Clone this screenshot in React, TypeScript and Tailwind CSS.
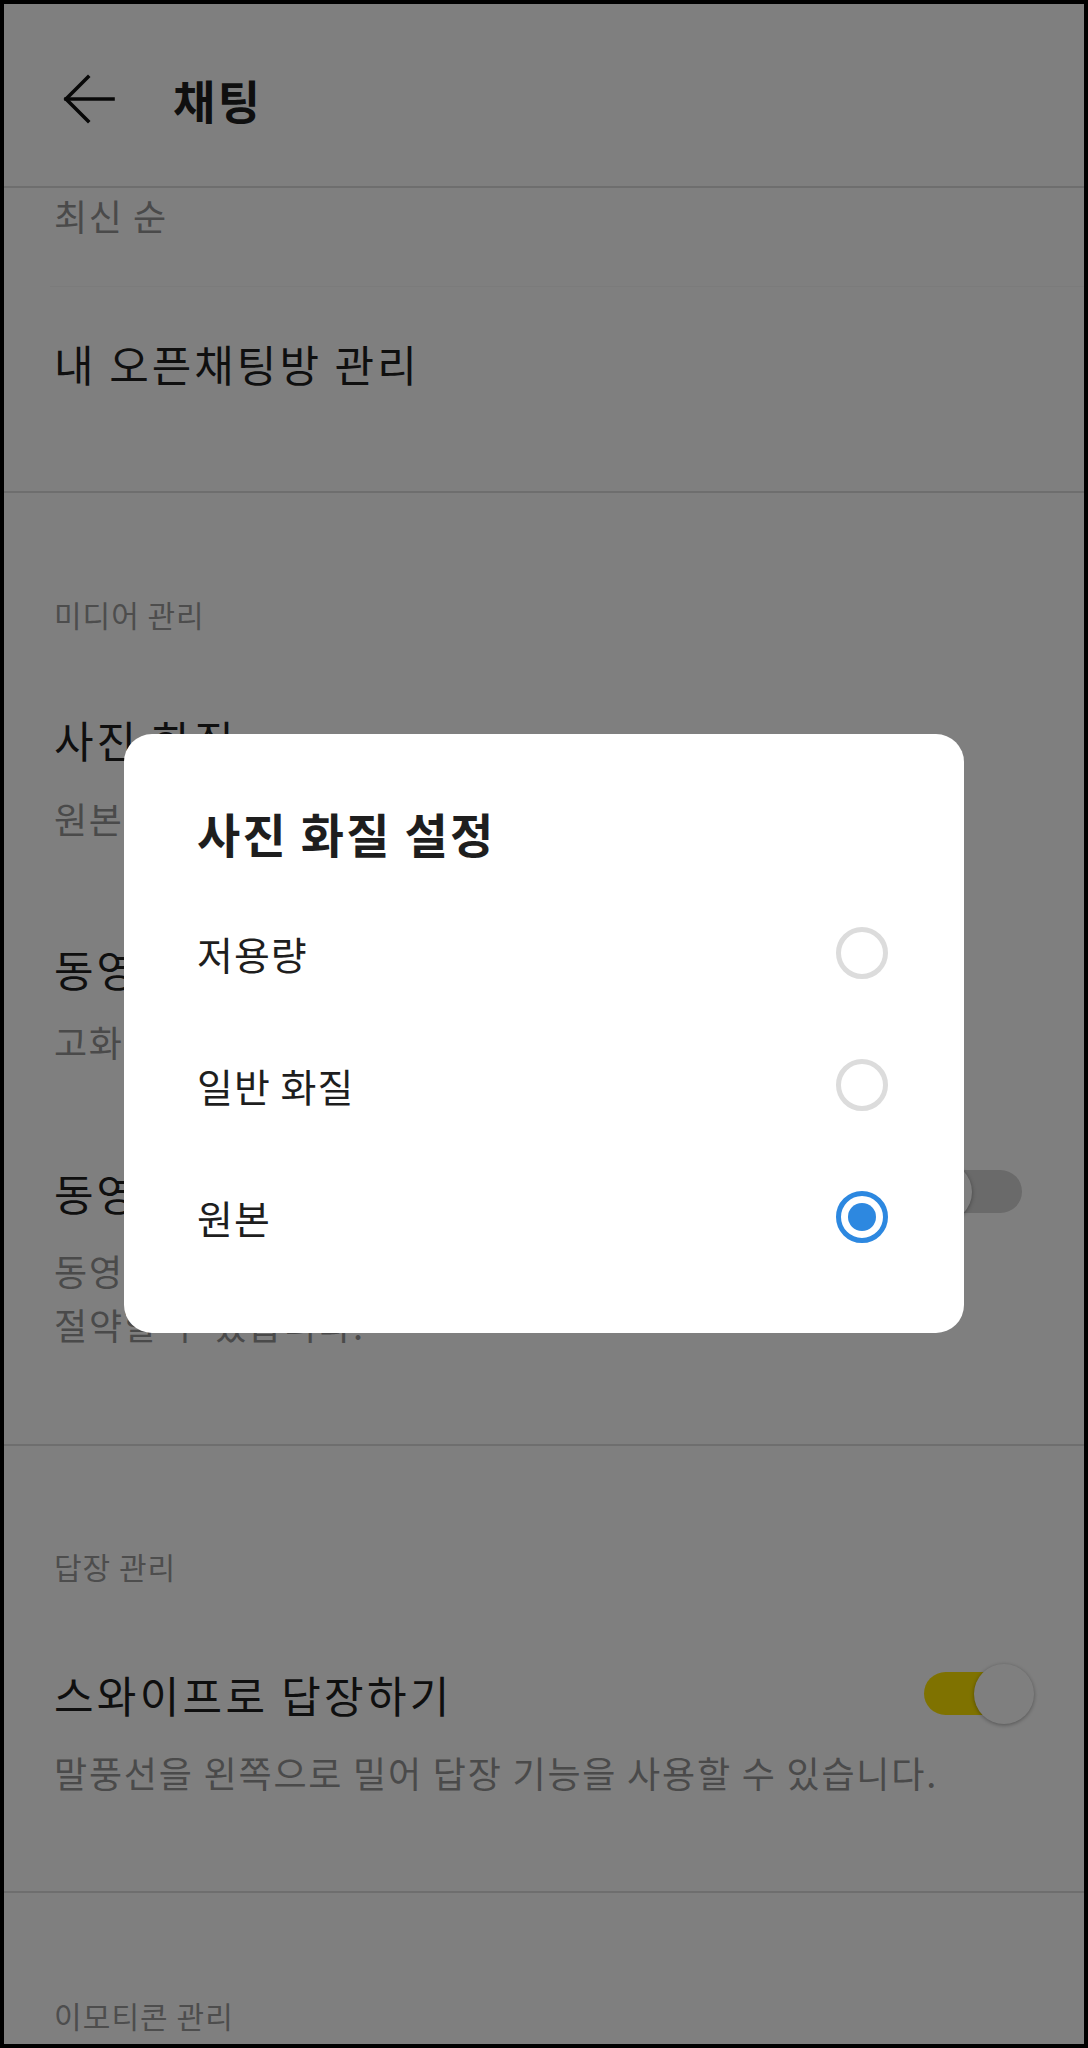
import React from "react";

const F = { fontFamily: '"Noto Sans CJK KR", "Noto Sans", sans-serif' };

function Toggle({ on }: { on: boolean }) {
  return (
    <div className="relative w-[122px] h-[60px] shrink-0">
      <div
        className={`absolute left-[12px] top-[8px] w-[98px] h-[43px] rounded-full ${
          on ? "bg-[#fee500]" : "bg-[#d4d4d4]"
        }`}
      />
      <div
        className={`absolute top-0 ${
          on ? "right-0" : "left-0"
        } w-[60px] h-[60px] rounded-full bg-white shadow-[0_1px_4px_rgba(0,0,0,0.35)]`}
      />
    </div>
  );
}

function Radio({ checked }: { checked: boolean }) {
  return checked ? (
    <div className="w-[52px] h-[52px] rounded-full border-[5px] border-[#2d88e0] flex items-center justify-center">
      <div className="w-[28px] h-[28px] rounded-full bg-[#2d88e0]" />
    </div>
  ) : (
    <div className="w-[52px] h-[52px] rounded-full border-[5px] border-[#dcdcdc]" />
  );
}

export default function App() {
  return (
    <div
      className="relative w-[1088px] h-[2048px] overflow-hidden border-4 border-black bg-white text-[#1e1e1e]"
      style={F}
    >
      {/* Header */}
      <div className="h-[184px] pt-[8px] flex items-center border-b-2 border-[#dcdcdc]">
        <svg
          className="ml-[59px]"
          width="52"
          height="52"
          viewBox="0 0 52 52"
          fill="none"
          stroke="#111"
          strokeWidth="3.6"
          strokeLinecap="square"
        >
          <path d="M3 26 H50" />
          <path d="M25 4 L3 26 L25 48" strokeLinejoin="miter" />
        </svg>
        <div className="ml-[58px] text-[46px] leading-[56px] font-bold tracking-[2.5px]">채팅</div>
      </div>

      {/* Scrolled tail */}
      <div className="px-[50px] pt-[3px] text-[36px] leading-[48px] tracking-[1.6px] text-[#949494]">최신 순</div>
      <div className="mt-[47px] ml-[46px] h-px bg-[#f7f7f7]" />
      <div className="px-[50px] pt-[48px] pb-[100px] text-[43px] leading-[56px] tracking-[3px]">내 오픈채팅방 관리</div>
      <div className="h-[2px] bg-[#dcdcdc]" />

      {/* Media */}
      <div className="px-[50px] pt-[101px] text-[30px] leading-[40px] tracking-[1px] text-[#9a9a9a]">미디어 관리</div>
      <div className="px-[50px] pt-[77px] text-[43px] leading-[56px] tracking-[3px]">사진 화질</div>
      <div className="px-[50px] pt-[27px] text-[36px] leading-[48px] tracking-[1.6px] text-[#949494]">원본</div>
      <div className="px-[50px] pt-[98px] text-[43px] leading-[56px] tracking-[3px]">동영상 화질</div>
      <div className="px-[50px] pt-[21px] text-[36px] leading-[48px] tracking-[1.6px] text-[#949494]">고화질</div>
      <div className="pl-[50px] pr-[50px] pt-[97px] flex items-center justify-between">
        <div className="text-[43px] leading-[56px] tracking-[3px]">동영상 자동 재생</div>
        <Toggle on={false} />
      </div>
      <div className="px-[50px] pt-[21px] pb-[93px] text-[36px] leading-[54px] tracking-[1.8px] text-[#949494]">
        동영상 자동 재생을 끄면 데이터를
        <br />
        절약할 수 있습니다.
      </div>
      <div className="h-[2px] bg-[#dcdcdc]" />

      {/* Reply */}
      <div className="px-[50px] pt-[100px] text-[30px] leading-[40px] tracking-[1px] text-[#9a9a9a]">답장 관리</div>
      <div className="pl-[50px] pr-[50px] pt-[78px] flex items-center justify-between">
        <div className="text-[43px] leading-[56px] tracking-[3.3px]">스와이프로 답장하기</div>
        <Toggle on={true} />
      </div>
      <div className="px-[50px] pt-[21px] pb-[92px] text-[36px] leading-[54px] tracking-[1.8px] text-[#949494]">
        말풍선을 왼쪽으로 밀어 답장 기능을 사용할 수 있습니다.
      </div>
      <div className="h-[2px] bg-[#dcdcdc]" />
      <div className="px-[50px] pt-[102px] text-[30px] leading-[40px] tracking-[1.1px] text-[#9a9a9a]">이모티콘 관리</div>

      {/* Dim overlay */}
      <div className="absolute inset-0 bg-black/50" />

      {/* Dialog */}
      <div className="absolute left-[120px] top-[730px] w-[840px] h-[599px] rounded-[28px] bg-white pt-[69px] pl-[73px] pr-[76px]">
        <div className="text-[47px] leading-[60px] font-bold tracking-[2.2px] text-[#1e1e1e]">사진 화질 설정</div>
        <div className="mt-[24px]">
          {[
            ["저용량", false],
            ["일반 화질", false],
            ["원본", true],
          ].map(([label, c]) => (
            <div key={label as string} className="h-[132px] flex items-center justify-between">
              <div className="text-[39px] leading-[50px] tracking-[1px] text-[#1e1e1e]">{label as string}</div>
              <Radio checked={c as boolean} />
            </div>
          ))}
        </div>
      </div>
    </div>
  );
}
